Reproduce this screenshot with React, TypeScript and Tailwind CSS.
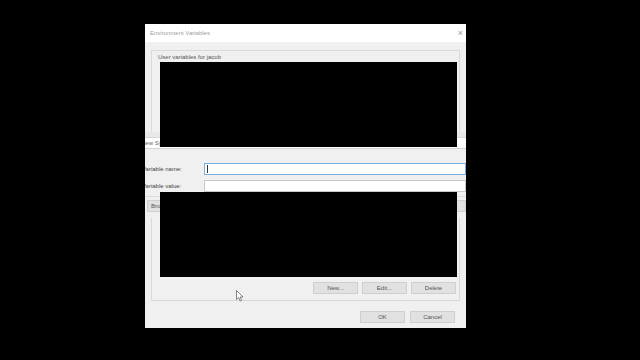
import React from 'react';

const font = { fontFamily: '"Liberation Sans", "Noto Sans", sans-serif' };

const Btn = ({ label, className = '' }: { label: string; className?: string }) => (
  <div
    className={`h-[12px] w-[45px] bg-[#e1e1e1] border border-[#cfcfcf] flex items-center justify-center text-[6px] text-[#555] ${className}`}
  >
    {label}
  </div>
);

const Cursor = () => (
  <svg width="8" height="12" viewBox="0 0 8 12" className="absolute left-[236px] top-[290px] z-30">
    <path d="M0.5 0.5 L0.5 9.5 L2.7 7.5 L4.2 11 L5.6 10.4 L4.2 7 L7 7 Z" fill="#fff" stroke="#666" strokeWidth="0.8" />
  </svg>
);

export default function App() {
  return (
    <div className="relative w-[640px] h-[360px] bg-black overflow-hidden" style={font}>
      <div className="pl-[145px] pt-[24px]">
        {/* main dialog */}
        <div className="w-[321px] h-[304px] bg-[#f0f0f0] flex flex-col">
          <div className="h-[18px] bg-white flex items-center justify-between pl-[5px] pr-[3px]">
            <span className="text-[6px] text-[#a0a0a0]">Environment Variables</span>
            <span className="text-[9px] text-[#9a9a9a] leading-none">×</span>
          </div>
          <div className="flex-1 flex flex-col px-[6px] pt-[8px]">
            <div className="relative border border-[#dadada] h-[251px] flex flex-col pl-[8px] pr-[2px]">
              <span className="text-[6px] text-[#555] leading-none pt-[3px] pb-[2px] -ml-[2px]">User variables for jacob</span>
              <div className="relative z-20 w-[297px] h-[85px] bg-black"></div>
              <div className="h-[45px]"></div>
              <div className="relative z-20 w-[297px] h-[85px] bg-black"></div>
              <div className="flex justify-end gap-[4px] pr-[1px] mt-[5px]">
                <Btn label="New..." />
                <Btn label="Edit..." />
                <Btn label="Delete" />
              </div>
            </div>
            <div className="flex justify-end gap-[5px] pr-[5px] mt-[10px]">
              <Btn label="OK" />
              <Btn label="Cancel" />
            </div>
          </div>
        </div>
      </div>

      {/* New System Variable dialog, lying over the main one */}
      <div className="absolute left-[145px] top-[132px] w-[321px] h-[86px] z-10 bg-[#f0f0f0] flex flex-col overflow-hidden">
        <div className="h-[6px] bg-[#e9e9e9] border-b border-[#d8d8d8]"></div>
        <div className="h-[11px] bg-white flex items-center border-b border-[#d4d4d4]">
          <span className="text-[6px] text-[#666] -ml-[4px] whitespace-nowrap">New System Variable</span>
        </div>
        <div className="flex flex-col gap-[5px] pt-[14px]">
          <div className="flex items-center">
            <span className="w-[63px] text-[6px] text-[#444] -ml-[3px] whitespace-nowrap">Variable name:</span>
            <div className="w-[264px] h-[12px] bg-white border border-[#7aaee0] flex items-center pl-[2px]">
              <div className="w-px h-[8px] bg-[#333]"></div>
            </div>
          </div>
          <div className="flex items-center">
            <span className="w-[63px] text-[6px] text-[#444] -ml-[3px] whitespace-nowrap">Variable value:</span>
            <div className="w-[264px] h-[12px] bg-white border border-[#c8c8c8]"></div>
          </div>
        </div>
        <div className="mt-[4px] border-t border-[#dcdcdc] flex items-center justify-between pt-[3px] pl-[2px]">
          <div className="h-[12px] w-[60px] bg-[#e1e1e1] border border-[#cfcfcf] flex items-center pl-[3px] text-[6px] text-[#555]">Browse Directory...</div>
          <div className="h-[12px] w-[20px] bg-[#e1e1e1] border border-[#cfcfcf]"></div>
        </div>
      </div>

      <Cursor />
    </div>
  );
}
